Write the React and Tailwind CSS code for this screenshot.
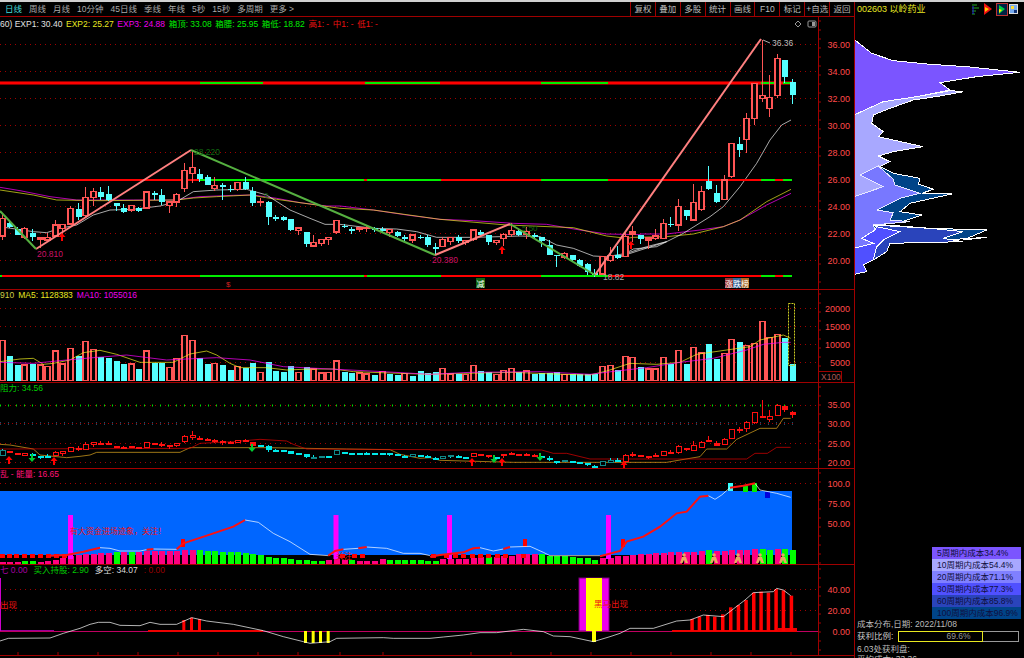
const RED = '#ff5555'
const CY = '#55ffff'
const LINE = '#a00000'

// x of a bar by index
const bx = i => 1.5 + 7.6 * i

// points read off the 3x crops -> page coords
const pts = (list, ox = 0, oy = 130) => list.map(([x, y]) => `${ox + x / 3},${oy + y / 3}`).join(' ')

// kind, body top, body bottom, high, low (y in 3x crop units from y=130)
const candles = [
  ['r',265,318,250,330],['c',278,292,270,295],['c',298,314,290,316],['r',295,322,290,326],['c',308,322,298,332],
  ['r',323,327,323,355],['r',322,330,310,335],['r',285,318,270,320],['r',283,296,283,325],['r',236,282,228,285],
  ['c',238,262,220,270],['r',203,256,172,260],['r',184,202,175,228],['c',185,202,170,210],['c',192,210,168,212],
  ['c',220,228,220,242],['c',235,246,222,248],['r',226,240,226,245],['c',234,242,230,246],['r',186,234,184,236],
  ['c',188,196,184,210],['c',196,215,178,226],['r',216,226,216,248],['r',194,216,188,232],['r',122,176,98,186],
  ['r',112,130,60,158],['c',132,148,118,155],['c',140,164,136,165],['r',166,176,140,184],['c',165,172,160,210],
  ['c',176,180,165,185],['r',158,178,155,184],['c',156,176,140,180],['c',182,218,172,228],['r',214,218,205,228],
  ['c',216,262,212,284],['c',260,266,255,272],['c',262,270,258,272],['c',268,300,268,304],['r',294,302,290,316],
  ['c',306,342,306,350],['r',338,348,314,350],['r',328,340,328,348],['r',322,328,322,344],['r',272,306,270,312],
  ['c',287,291,283,294],['c',296,303,290,312],['r',294,299,294,305],['r',292,296,286,305],['c',295,300,290,306],
  ['c',297,302,292,306],['r',299,308,299,322],['c',306,318,304,322],['c',322,326,315,335],['r',315,330,315,340],
  ['c',320,324,316,328],['c',322,344,316,350],['c',350,358,338,372],['r',328,350,322,350],['r',323,334,320,344],
  ['c',322,332,315,340],['r',332,338,332,345],['r',300,328,298,332],['c',306,316,300,322],['c',316,336,316,345],
  ['r',332,338,332,344],['r',314,326,310,348],['r',302,314,280,320],['c',304,314,300,318],['r',304,313,290,326],
  ['c',316,320,308,328],['c',322,334,322,350],['c',345,374,330,376],['c',376,378,376,410],['r',370,382,366,388],
  ['c',376,390,376,392],['c',390,408,388,412],['c',402,425,400,436],['c',430,436,418,440],['r',380,432,380,436],
  ['r',376,392,350,396],['c',374,384,348,388],['r',320,380,308,382],['r',306,312,288,335],['c',314,326,314,342],
  ['r',324,330,324,358],['r',318,326,298,330],['r',280,326,268,328],['c',281,284,260,290],['r',229,285,207,303],
  ['c',240,258,240,270],['r',217,270,162,272],['r',185,238,168,242],['c',152,176,108,180],['c',190,216,165,218],
  ['r',150,208,135,210],['r',40,140,40,145],['c',42,60,22,80],['r',-35,28,-50,68],['r',-140,-35,-140,-15],
  ['r',-104,-95,-270,-85],['r',-98,-65,-165,-40],['r',-215,-104,-228,-95],['c',-210,-160,-210,-142],['c',-144,-106,-152,-78],
]

// volume bar tops, 3x crop units from y=285
const vols = [
  ['r',167],['c',212],['c',240],['r',240],['c',237],['r',240],['r',245],['r',198],['r',237],['r',190],
  ['c',212],['r',170],['r',194],['c',215],['c',219],['c',228],['c',237],['r',237],['c',252],['r',198],
  ['c',233],['c',233],['r',247],['r',221],['r',152],['r',167],['c',219],['c',237],['r',235],['c',240],
  ['c',255],['r',245],['c',248],['c',235],['r',262],['c',232],['c',258],['c',261],['c',244],['r',262],
  ['c',246],['r',252],['r',264],['r',262],['r',228],['c',261],['c',263],['r',264],['r',267],['c',269],
  ['r',260],['c',267],['c',269],['r',266],['c',273],['c',258],['c',264],['c',262],['r',250],['r',267],
  ['c',268],['r',268],['r',241],['c',258],['c',262],['r',268],['r',257],['r',250],['c',262],['r',258],
  ['c',266],['c',265],['c',263],['c',262],['r',268],['c',268],['c',267],['c',267],['c',268],['r',245],
  ['r',241],['c',255],['r',215],['r',218],['c',247],['r',252],['r',252],['r',218],['c',238],['r',197],
  ['c',236],['r',188],['r',204],['c',178],['c',221],['r',205],['r',164],['c',170],['r',182],['r',176],
  ['r',110],['r',158],['r',148],['c',160],['c',238],
]

// energy bars in the blue pane, 3x crop units from y=465
const energy = [
  ['p',290],['p',290],['p',290],['g',288],['g',288],['p',290],['p',288],['p',285],['p',278],['p',272],
  ['p',270],['p',268],['p',266],['p',263],['p',263],['g',262],['p',262],['g',261],['p',260],['p',259],
  ['p',259],['p',258],['p',258],['p',257],['p',256],['p',256],['g',255],['g',258],['g',259],['g',260],
  ['g',261],['g',261],['g',264],['g',267],['g',270],['g',275],['g',278],['g',280],['g',282],['g',284],
  ['g',286],['g',288],['g',288],['p',285],['p',282],['p',285],['g',286],['p',287],['p',287],['p',287],
  ['p',282],['g',286],['g',286],['g',286],['g',286],['g',286],['g',288],['g',288],['p',283],['p',281],
  ['p',281],['p',281],['p',278],['p',277],['g',275],['p',275],['p',272],['p',272],['p',268],['p',268],
  ['p',268],['g',266],['g',272],['g',274],['g',274],['g',275],['g',280],['g',280],['g',285],['p',280],
  ['p',278],['p',274],['p',272],['p',270],['p',268],['p',266],['p',264],['p',264],['p',262],['p',261],
  ['p',260],['p',260],['p',259],['g',255],['p',258],['p',257],['p',256],['p',255],['p',254],['p',253],
  ['g',252],['g',254],['p',252],['g',252],['g',254],
]

const redRegime = i => (i > 0 && i < 4) || (i >= 7 && i <= 33) || (i >= 62 && i <= 70 && i !== 65) || i >= 82

function Dots({ ys, color = LINE, x2 = 818 }) {
  return ys.map(y => (
    <line key={y} x1="0" x2={x2} y1={y + 0.5} y2={y + 0.5} stroke={color} strokeDasharray="1 4" />
  ))
}

function Axis({ top, bottom, labels }) {
  const ticks = []
  for (let y = top + 4; y < bottom; y += 9) ticks.push(y)
  return (
    <>
      <line x1="818.5" x2="818.5" y1={top} y2={bottom} stroke={LINE} />
      {ticks.map(y => <line key={y} x1="819" x2="821" y1={y} y2={y} stroke={LINE} />)}
      {labels.map(([t, y]) => (
        <text key={t} x="850" y={y + 3.5} textAnchor="end" fontSize="9" fill="#ff4a4a">{t}</text>
      ))}
    </>
  )
}

function Arrow({ x, y, color = '#ff0000', down }) {
  const s = down ? -1 : 1
  return (
    <polygon
      fill={color}
      points={`${x},${y} ${x + 3.5},${y + 4 * s} ${x + 1},${y + 4 * s} ${x + 1},${y + 8 * s} ${x - 1},${y + 8 * s} ${x - 1},${y + 4 * s} ${x - 3.5},${y + 4 * s}`}
    />
  )
}

function Segs({ y, segs }) {
  return segs.map(([a, b, c]) => <rect key={a} x={a} y={y} width={b - a} height="2" fill={c} />)
}

const G = '#00ee00'
const R = '#ff0000'

function Thin({ points, color }) {
  return <polyline points={points} fill="none" stroke={color} strokeWidth="0.7" />
}

function MainChart() {
  const magenta = pts([[0,172],[60,182],[150,200],[230,210],[400,210],[520,210],[600,200],[700,196],[760,195],[830,205],[900,218],[980,228],[1020,228]]) + ' ' +
    pts([[100,240],[200,255],[300,268],[400,272],[520,280],[620,283],[720,300],[800,312],[900,314]], 340) + ' ' +
    pts([[120,612],[200,612],[300,600],[370,590],[420,570],[500,525],[573,490]], 600, 30)
  const yellow = pts([[0,180],[100,195],[170,210],[300,212],[530,210],[580,204],[650,200],[750,195],[830,208],[1020,235]]) + ' ' +
    pts([[100,240],[300,268],[500,285],[700,293],[800,318],[860,325]], 340) + ' ' +
    pts([[100,622],[200,620],[280,612],[370,590],[420,570],[500,515],[573,478]], 600, 30)
  const white = pts([[0,290],[100,305],[140,308],[180,295],[230,285],[280,255],[330,240],[400,238],[480,228],[530,215],[580,185],[650,180],[740,178],[800,195],[870,240],[930,265],[975,283],[1020,283]]) + ' ' +
    pts([[100,295],[170,297],[230,305],[290,322],[340,322],[400,322],[480,320],[540,318],[600,320],[650,345],[700,355],[760,378],[800,380],[860,370],[920,350],[980,335]], 340) + ' ' +
    pts([[60,680],[100,657],[170,650],[250,610],[330,560],[370,530],[420,470],[470,400],[510,330],[545,285],[573,270]], 600, 30)

  return (
    <svg className="block" width="854" height="272" viewBox="0 17 854 272">
      <Dots ys={[44, 71, 98, 125, 152, 206, 233, 260]} />
      <Thin points={magenta} color="#ff00ff" />
      <Thin points={yellow} color="#e8e820" />
      <Thin points={white} color="#f0f0f0" />

      <rect x="0" y="81" width="792" height="4" fill="#8a0000" />
      <Segs y={82} segs={[[0,200,R],[200,263,G],[263,365,R],[365,440,G],[440,541,R],[541,608,G],[608,761,R],[761,775,G],[775,783,R],[783,792,G]]} />
      <Segs y={179} segs={[[0,200,R],[200,364,G],[364,367,R],[367,441,G],[441,541,R],[541,608,G],[608,761,R],[761,775,G],[775,783,R],[783,792,G]]} />
      <Segs y={275} segs={[[0,2,G],[2,200,R],[200,364,G],[364,367,R],[367,441,G],[441,541,R],[541,608,G],[608,761,R],[761,775,G],[775,783,R],[783,792,G]]} />

      {candles.map(([k, t, b, h, l], i) => {
        const x = Math.round(bx(i))
        const color = k === 'r' ? RED : CY
        const top = 130 + t / 3
        const bot = 130 + b / 3
        return (
          <g key={i} shapeRendering="crispEdges">
            <line x1={x + 0.5} x2={x + 0.5} y1={130 + h / 3} y2={130 + l / 3} stroke={color} />
            {k === 'r'
              ? <rect x={x - 2} y={top} width="5" height={Math.max(bot - top, 1)} fill="#000" stroke={color} strokeWidth="1.3" />
              : <rect x={x - 2.5} y={top} width="6" height={Math.max(bot - top, 1)} fill={color} />}
          </g>
        )
      })}

      <polyline points="36,249 191,150" fill="none" stroke="#ff8080" strokeWidth="2" />
      <polyline points="435,255 510,224" fill="none" stroke="#ff8080" strokeWidth="2" />
      <polyline points="595,275 761,39" fill="none" stroke="#ff8080" strokeWidth="2" />
      <polyline points="0,211 36,249" fill="none" stroke="#55b040" strokeWidth="2" />
      <polyline points="191,150 435,255" fill="none" stroke="#55b040" strokeWidth="2" />
      <polyline points="510,224 595,275" fill="none" stroke="#55b040" strokeWidth="2" />

      <Arrow x={62} y={233} />
      <Arrow x={502} y={246} />
      <Arrow x={631} y={241} />

      <text x="37" y="257" fontSize="8.5" fill="#cc1166">20.810</text>
      <text x="194" y="155" fontSize="8.5" fill="#116611">28.220</text>
      <text x="432" y="263" fontSize="8.5" fill="#cc1166">20.380</text>
      <text x="603" y="280" fontSize="8.5" fill="#aaaaaa">18.82</text>
      <text x="772" y="46" fontSize="8.5" fill="#bbbbbb">36.36</text>
      <polyline points="763,40 770,43" fill="none" stroke="#aaaaaa" />
      <text x="264" y="198" fontSize="8" fill="#116611">0</text>
      <text x="522" y="231" fontSize="8" fill="#116611">5.50</text>
      <text x="226" y="287" fontSize="8" fill="#cc2222">$</text>

      <rect x="476" y="278" width="9" height="10" fill="#116611" />
      <text x="476.5" y="286.5" fontSize="8" fill="#ffffff">减</text>
      <rect x="725" y="278" width="8" height="10" fill="#993333" />
      <text x="725" y="286.5" fontSize="8" fill="#ffffff">涨</text>
      <rect x="733" y="278" width="8" height="10" fill="#336699" />
      <text x="733" y="286.5" fontSize="8" fill="#ffffff">跌</text>
      <rect x="741" y="278" width="8" height="10" fill="#aa6622" />
      <text x="741" y="286.5" fontSize="8" fill="#ffffff">榜</text>

      <polygon points="798,21 801,24 798,27 795,24" fill="none" stroke="#999999" />
      <rect x="808" y="21" width="8" height="6" rx="1" fill="none" stroke="#999999" />
      <rect x="812" y="22" width="3" height="4" fill="#999999" />

      <Axis top={17} bottom={289} labels={[['36.00',44],['34.00',71],['32.00',98],['30.00',125],['28.00',152],['26.00',179],['24.00',206],['22.00',233],['20.00',260]]} />
    </svg>
  )
}

function VolumeChart() {
  const yellow = pts([[0,230],[60,222],[100,220],[130,238],[160,235],[210,225],[250,203],[300,196],[350,208],[420,232],[520,232],[570,207],[620,198],[650,210],[690,235],[720,248],[800,248],[860,255],[930,252],[1000,252],[1060,260],[1200,265]], 0, 285) + ' ' +
    pts([[0,268],[100,265],[250,262],[400,268],[480,270],[530,258],[600,235],[680,238],[750,232],[800,208],[890,195],[960,185],[990,165],[1060,150],[1082,160]], 430, 285)
  const magenta = pts([[0,232],[100,235],[200,225],[280,218],[380,210],[500,225],[560,222],[650,218],[750,225],[850,245],[950,250],[1050,255],[1150,260]], 0, 285) + ' ' +
    pts([[0,268],[120,262],[330,260],[480,268],[560,258],[650,248],[750,232],[850,220],[950,195],[1000,178],[1060,172],[1082,172]], 430, 285)
  return (
    <svg className="block" width="854" height="92" viewBox="0 290 854 92">
      <Dots ys={[308, 326, 344, 362]} />
      {vols.map(([k, t], i) => {
        const x = Math.round(bx(i))
        const top = 285 + t / 3
        return k === 'r'
          ? <rect key={i} x={x - 2} y={top} width="5" height={380.5 - top} fill="#000" stroke={RED} strokeWidth="1.3" shapeRendering="crispEdges" />
          : <rect key={i} x={x - 2.5} y={top} width="6" height={381 - top} fill={CY} shapeRendering="crispEdges" />
      })}
      <rect x="788.5" y="303.5" width="6" height="62" fill="none" stroke="#cccc22" strokeDasharray="2 1" />
      <Thin points={yellow} color="#f0f020" />
      <Thin points={magenta} color="#ff00ff" />
      <Axis top={290} bottom={382} labels={[['20000',308],['15000',326],['10000',344],['5000',362]]} />
      <rect x="818.5" y="371.5" width="23" height="11" fill="#000" stroke={LINE} />
      <text x="821" y="380" fontSize="8.5" fill="#aa5555">X100</text>
    </svg>
  )
}

function LevelChart() {
  const toY = py => {
    const p = 36 - (py - 44) / 13.5
    return 462 - (p - 20) * 3.8
  }
  const gold = pts([[0,478],[30,480],[100,492],[120,510],[200,518],[240,514],[270,510],[290,502],[540,502],[570,488],[800,488],[1040,492],[1170,494],[1200,508],[1260,520]], 0, 285) + ' ' +
    pts([[0,518],[30,526],[250,532],[710,532],[750,525],[810,515],[830,492],[890,492],[920,463],[990,430],[1040,430],[1060,400],[1082,400]], 430, 285)
  const red = pts([[0,492],[570,490],[600,475],[700,470],[780,463],[860,468],[880,478],[920,492],[1290,494]], 0, 285) + ' ' +
    pts([[0,495],[335,495],[370,505],[410,505],[480,522],[950,522],[975,505],[1012,505],[1040,487],[1082,487]], 430, 285)
  return (
    <svg className="block" width="854" height="85" viewBox="0 383 854 85">
      <Dots ys={[405, 443, 462]} />
      <line x1="0" x2="795" y1="405.5" y2="405.5" stroke="#00dd00" strokeDasharray="1 7" strokeWidth="2" />
      <line x1="0" x2="795" y1="423.5" y2="423.5" stroke="#22aadd" strokeDasharray="1 7" strokeWidth="2" />
      <line x1="0" x2="795" y1="423.5" y2="423.5" stroke={LINE} strokeDasharray="1 3" />
      <Thin points={gold} color="#e0a820" />
      <Thin points={red} color="#e00000" />
      {candles.map(([k, t, b, h, l], i) => {
        const x = Math.round(bx(i))
        const top = toY(130 + t / 3)
        const bot = toY(130 + b / 3)
        const isRed = redRegime(i)
        const color = isRed ? '#ff1010' : '#00e8e8'
        const tall = k === 'r' && b - t > 9
        return (
          <g key={i} shapeRendering="crispEdges">
            <line x1={x + 0.5} x2={x + 0.5} y1={toY(130 + h / 3)} y2={toY(130 + l / 3)} stroke={color} />
            {tall
              ? <rect x={x - 2} y={top} width="5" height={Math.max(bot - top, 1)} fill="#000" stroke={isRed ? '#ff1010' : '#118888'} />
              : <rect x={x - 2.5} y={top} width="6" height={Math.max(bot - top, 2)} fill={color} />}
          </g>
        )
      })}
      {[[9,456],[54,457],[472,458],[502,458],[624,461]].map(([x, y]) => <Arrow key={x} x={x} y={y} />)}
      {[[32,462],[252,452],[494,463],[540,461]].map(([x, y]) => <Arrow key={x} x={x} y={y} color="#00cc33" down />)}
      <Axis top={383} bottom={468} labels={[['35.00',404.5],['30.00',423],['25.00',443],['20.00',462]]} />
    </svg>
  )
}

function Runner({ x }) {
  return (
    <g fill="#e8a860">
      <circle cx={x} cy="555" r="1.8" />
      <polygon points={`${x - 2},557 ${x + 2},557 ${x + 4},563 ${x + 1.5},563 ${x},560 ${x - 1.5},563 ${x - 4},563`} />
    </g>
  )
}

function EnergyChart() {
  const thin = [
    pts([[300,248],[330,250],[360,258],[420,258],[440,254]], 0, 465),
    pts([[460,252],[530,253]], 0, 465),
    pts([[735,165],[775,172],[820,205],[870,230],[930,268],[985,272]], 0, 465),
    pts([[1030,253],[1075,250]], 0, 465),
    pts([[1100,246],[1160,250],[1210,265],[1260,265],[1290,272]], 0, 465),
    pts([[150,248],[190,258],[220,252]], 430, 465),
    pts([[240,246],[300,244],[340,262],[360,272],[510,272]], 430, 465),
    pts([[835,92],[855,103],[875,90],[900,68]], 430, 465),
    pts([[975,55],[990,75],[1040,85],[1082,97]], 430, 465),
  ]
  const thick = [
    pts([[150,272],[200,270],[250,260],[300,248]], 0, 465),
    pts([[440,254],[460,252]], 0, 465),
    pts([[530,253],[550,235],[620,212],[700,185],[735,165]], 0, 465),
    pts([[985,272],[1005,258],[1030,253]], 0, 465),
    pts([[1075,250],[1100,246]], 0, 465),
    pts([[0,275],[30,270],[100,262],[130,250],[150,248]], 430, 465),
    pts([[220,252],[240,246]], 430, 465),
    pts([[510,274],[570,258],[590,230],[640,215],[690,185],[740,145],[770,140],[810,95],[835,92]], 430, 465),
    pts([[900,68],[940,62],[975,55]], 430, 465),
  ]
  return (
    <svg className="block" width="854" height="95" viewBox="0 469 854 95">
      <Dots ys={[483]} />
      <rect x="0" y="491" width="792" height="64" fill="#0066ff" />
      {energy.map(([k, t], i) => {
        const x = Math.round(bx(i))
        const top = 465 + t / 3
        return <rect key={i} x={x - 2.5} y={top} width="6" height={564 - top} fill={k === 'p' ? '#ff0080' : '#00ff00'} shapeRendering="crispEdges" />
      })}
      {[68, 333.5, 447, 606].map(x => <rect key={x} x={x} y="515" width="5" height="44" fill="#ff00ff" />)}
      <rect x="728" y="483" width="5" height="8" fill="#33ffff" />
      <rect x="743" y="486" width="5" height="6" fill="#00ee00" />
      <rect x="752" y="483" width="5" height="9" fill="#00ee00" />
      <rect x="765" y="492" width="5" height="6" fill="#0000dd" />
      {[0,7,14,22,30,38,46,54,62,340,352,360,431,444,453,461,470,478,486,495,503,521].map(x => (
        <rect key={x} x={x} y="554" width="5" height="4" fill="#ff0000" />
      ))}
      <rect x="523" y="539" width="4" height="8" fill="#ff0000" />
      <rect x="181" y="539" width="4" height="8" fill="#ff0000" />
      <rect x="621" y="539" width="4" height="8" fill="#ff0000" />
      {thin.map(p => <Thin key={p} points={p} color="#ffffff" />)}
      {thick.map(p => <polyline key={p} points={p} fill="none" stroke="#ff1010" strokeWidth="2" />)}
      <text x="70" y="534" fontSize="8" fill="#ee1111">有大资金进场迹象，关注！</text>
      <text x="336" y="559" fontSize="8" fill="#ee1111">关注</text>
      {[684, 714, 738, 760, 783].map(x => <Runner key={x} x={x} />)}
      <Axis top={469} bottom={564} labels={[['100.0',483],['75.00',503],['50.00',523]]} />
    </svg>
  )
}

function SignalChart() {
  const white = pts([[0,528],[25,520],[150,519],[190,505],[240,490],[270,478],[295,472],[330,472],[360,481],[420,482],[450,472],[480,478],[530,478],[575,458],[620,468],[700,478],[790,497],[850,515],[910,530],[930,535],[990,530],[1010,520],[1150,518],[1180,520],[1290,520]], 0, 465) + ' ' +
    pts([[40,516],[100,510],[150,503],[200,503],[280,493],[340,500],[370,513],[420,515],[490,530],[540,515],[570,505],[600,490],[670,490],[740,468],[780,465],[820,450],[880,455],[945,405],[970,383],[1030,380],[1040,370],[1060,375],[1082,392]], 430, 465)
  const bars = [[781,462],[803,455],[828,450],[849,455],[873,448],[897,427],[920,420],[943,405],[966,383],[988,380],[1010,383],[1033,372],[1055,376],[1079,392]]
  return (
    <svg className="block" width="854" height="90" viewBox="0 565 854 90">
      <Dots ys={[589, 610]} />
      <line x1="0" x2="818" y1="631.5" y2="631.5" stroke="#c00060" />
      <rect x="0" y="578" width="1" height="53" fill="#cc00cc" />
      <rect x="1" y="630" width="53" height="1" fill="#990099" />

      <rect x="148" y="630" width="115" height="2" fill="#ee0000" />
      <rect x="672" y="630" width="125" height="2" fill="#ee0000" />
      <rect x="778" y="628" width="19" height="4" fill="#ee0000" />
      {[547, 570, 594].map((x, i) => (
        <rect key={x} x={x / 3} y={465 + [465, 458, 462][i] / 3} width="3" height={(497 - [465, 458, 462][i]) / 3} fill="#ff0000" />
      ))}
      {bars.map(([x, t]) => <rect key={x} x={430 + x / 3} y={465 + t / 3} width="3.5" height={(497 - t) / 3} fill="#ff0000" />)}
      {[912, 935, 957, 980].map(x => <rect key={x} x={x / 3} y="631" width="3" height="12" fill="#ffff00" />)}

      <rect x="579" y="578" width="30" height="53" fill="#ee00ee" stroke="#7a007a" />
      <rect x="586" y="578" width="16" height="53" fill="#ffff00" />
      <rect x="592" y="631" width="4" height="11" fill="#ffff00" />

      <Thin points={white} color="#ffffff" />

      <text x="0" y="608" fontSize="8.5" fill="#ee1111">出现</text>
      <text x="594" y="607" fontSize="8.5" fill="#ee1111">黑马出现</text>
      {[18, 58, 98, 138, 178, 218, 258, 298, 340, 383, 471, 511, 551, 591, 631, 671, 711, 751, 791].map(x => (
        <line key={x} x1={x} x2={x} y1="652" y2="655" stroke={LINE} />
      ))}
      <Axis top={565} bottom={655} labels={[['40.00',589],['20.00',610],['0.00',631]]} />
    </svg>
  )
}

function ChipChart() {
  const p = list => list.map(([x, y]) => `${850 + x / 3},${30 + y / 3}`).join(' ')
  const purple = [[12,28],[65,70],[130,92],[240,103],[350,110],[510,127],[380,140],[270,158],[300,180],[200,200],[100,215],[12,255]]
  const lavender = [[12,255],[100,215],[200,200],[300,182],[340,185],[270,198],[190,210],[120,235],[70,255],[65,280],[100,305],[85,320],[220,350],[130,365],[85,378],[120,395],[90,410],[30,435],[100,470],[12,500]]
  const navy = [[85,378],[120,395],[90,410],[130,430],[210,445],[205,462],[250,478],[215,490],[305,492],[180,520],[150,545],[215,555],[155,575],[70,582],[240,595],[410,600],[340,630],[410,622],[120,640],[110,665],[70,690],[40,705],[50,725],[12,733],[12,500],[85,408]]
  const medium = [[12,500],[100,470],[30,435],[85,408],[130,448],[135,465],[210,490],[150,505],[100,530],[80,540],[130,548],[120,570],[180,575],[70,585],[75,600],[35,625],[70,640],[12,655]]
  const blue2 = [[70,585],[240,595],[340,605],[280,625],[340,635],[120,640],[110,665],[70,690],[80,650],[100,630],[150,605],[80,590]]
  const blue3 = [[12,655],[70,640],[35,625],[75,600],[80,590],[150,605],[100,630],[80,650],[70,690],[40,705],[50,725],[12,733]]
  return (
    <svg className="block" width="169" height="263" viewBox="855 17 169 263" shapeRendering="crispEdges">
      <polygon points={p(navy)} fill="#004488" stroke="#ffffff" />
      <polygon points={p(purple)} fill="#7b55ff" stroke="#ffffff" />
      <polygon points={p(lavender)} fill="#a8a8ff" stroke="#ffffff" />
      <polygon points={p(medium)} fill="#7878ff" stroke="#e8e8ff" />
      <polygon points={p(blue2)} fill="#2a44bb" stroke="#ffffff" />
      <polygon points={p(blue3)} fill="#5050ff" stroke="#ffffff" />
    </svg>
  )
}

function TopIcons() {
  return (
    <svg className="absolute right-[4px] top-[1px]" width="48" height="14" viewBox="974 3 48 14">
      <path d="M974 5h5M974 8h7M974 11h4M974 14h3" stroke="#22aa22" />
      <path d="M975 6v8" stroke="#2222dd" />
      <polygon points="986,3 994,9 986,15" fill="#ee1111" />
      <polygon points="987,7 991,9 987,12" fill="#ffcc00" />
      <rect x="998.5" y="3.5" width="11" height="12" fill="#002244" stroke="#bb3333" />
      <polygon points="1001,5 1007,9 1001,14" fill="#00cc44" />
      <polygon points="1001,9 1004,10 1001,13" fill="#ffee00" />
      <rect x="1011.5" y="4.5" width="8" height="9" fill="#77aaee" stroke="#dddddd" />
      <rect x="1013" y="6" width="3" height="3" fill="#ffdd33" />
      <rect x="1016" y="10" width="3" height="3" fill="#113377" />
    </svg>
  )
}

const tabs = ['周线', '月线', '10分钟', '45日线', '季线', '年线', '5秒', '15秒', '多周期', '更多 >']
const tools = ['复权', '叠加', '多股', '统计', '画线', 'F10', '标记', '+自选', '返回']
const costs = [
  ['5周期内成本34.4%', 'bg-[#7b55ff]'],
  ['10周期内成本54.4%', 'bg-[#a8a8ff]'],
  ['20周期内成本71.1%', 'bg-[#8080ff]'],
  ['30周期内成本77.3%', 'bg-[#5050ff]'],
  ['60周期内成本85.8%', 'bg-[#2a44bb]'],
  ['100周期内成本96.9%', 'bg-[#004488]'],
]

export default function App() {
  return (
    <div className="flex h-[658px] w-[1024px] flex-col overflow-hidden bg-black font-['Liberation_Sans','Noto_Sans_CJK_SC',sans-serif] text-[8.5px] leading-none">
      <div className="h-[2px] shrink-0 bg-[#d0d0d0]"></div>
      <div className="flex shrink-0">
        {/* left side, toolbar and the five panes */}
        <div className="w-[855px] border-r border-[#a00000]">
          <div className="flex h-[15px] items-center justify-between border-b border-[#a00000] pl-[5px]">
            <div className="flex gap-[7px] text-[#aaaaaa]">
              <span className="text-[#44dddd]">日线</span>
              {tabs.map(t => <span key={t}>{t}</span>)}
            </div>
            <div className="flex h-full text-[#bbbbbb]">
              {tools.map(t => (
                <span key={t} className="flex w-[24.9px] items-center justify-center border-l border-[#a00000]">{t}</span>
              ))}
            </div>
          </div>

          <div className="relative border-b border-[#a00000]">
            <MainChart />
            <div className="absolute left-0 top-[3px] flex gap-[3.6px] whitespace-nowrap">
              <span className="text-[#e0e0e0]">60) EXP1: 30.40</span>
              <span className="text-[#e8e820]">EXP2: 25.27</span>
              <span className="text-[#ee00ee]">EXP3: 24.88</span>
              <span className="text-[#00ee00]">箱顶: 33.08</span>
              <span className="text-[#00ee00]">箱腰: 25.95</span>
              <span className="text-[#00ee00]">箱低: 18.82</span>
              <span className="text-[#ee1111]">高1: -</span>
              <span className="text-[#ee1111]">中1: -</span>
              <span className="text-[#ee1111]">低1: -</span>
            </div>
          </div>

          <div className="relative border-b border-[#a00000]">
            <VolumeChart />
            <div className="absolute left-0 top-[1px] flex gap-[4px] whitespace-nowrap">
              <span className="text-[#cccc44]">910</span>
              <span className="text-[#e8e820]">MA5: 1128383</span>
              <span className="text-[#ee00ee]">MA10: 1055016</span>
            </div>
          </div>

          <div className="relative border-b border-[#a00000]">
            <LevelChart />
            <div className="absolute left-0 top-[1px] whitespace-nowrap text-[#00cc00]">阻力: 34.56</div>
          </div>

          <div className="relative border-b border-[#a00000]">
            <EnergyChart />
            <div className="absolute left-0 top-[1px] whitespace-nowrap text-[#ff1177]">乱 - 能量: 16.65</div>
          </div>

          <div className="relative border-b border-[#a00000]">
            <SignalChart />
            <div className="absolute left-0 top-[1px] flex gap-[6px] whitespace-nowrap">
              <span className="text-[#aa00aa]">七 0.00</span>
              <span className="text-[#00cc00]">买入持股: 2.90</span>
              <span className="text-[#dddddd]">多空: 34.07</span>
              <span className="text-[#990000]">: 0.00</span>
            </div>
          </div>
        </div>

        {/* right side, chip distribution */}
        <div className="relative w-[169px]">
          <div className="flex h-[15px] items-center pl-[2px] text-[9px] text-[#e8e820]">002603 以岭药业</div>
          <TopIcons />
          <ChipChart />
          <div className="ml-[77px] mt-[267px] w-[89px] text-[8.5px] text-[#101040]">
            {costs.map(([t, bg]) => (
              <div key={t} className={`flex h-[12px] items-center whitespace-nowrap pl-[5px] ${bg}`}>{t}</div>
            ))}
          </div>
          <div className="mt-[1px] whitespace-nowrap pl-[2px] text-[#bbbbbb]">成本分布,日期: 2022/11/08</div>
          <div className="mt-[2px] flex items-center pl-[2px] text-[#cccccc]">
            <span className="w-[41px]">获利比例:</span>
            <div className="relative flex h-[11px] w-[121px] items-center justify-center border border-[#999999]">
              <div className="absolute inset-y-[-1px] left-[-1px] w-[85px] border border-[#e8e820]"></div>
              <span className="text-[#999999]">69.6%</span>
            </div>
          </div>
          <div className="mt-[3px] pl-[2px] text-[#bbbbbb]">6.03处获利盘:</div>
          <div className="mt-[2px] pl-[2px] text-[#bbbbbb]">平均成本: 33.36</div>
        </div>
      </div>
    </div>
  )
}
